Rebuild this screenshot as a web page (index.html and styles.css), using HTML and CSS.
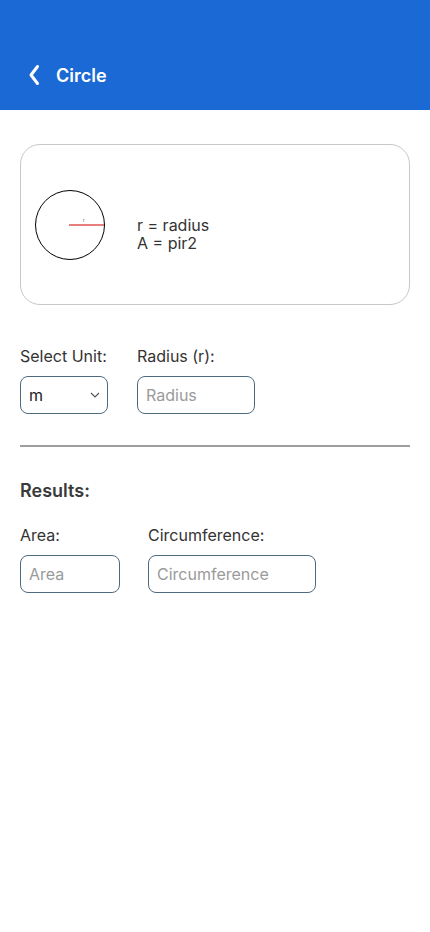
FILE: index.html
```html
<!DOCTYPE html>
<html>
<head>
<meta charset="utf-8">
<link rel="stylesheet" href="styles.css">
</head>
<body>
<header class="appbar">
  <svg class="back" width="14" height="22" viewBox="0 0 14 22"><path d="M10.5 2.5 L4 11 L10.5 19.5" fill="none" stroke="#fff" stroke-width="3" stroke-linecap="round" stroke-linejoin="round"/></svg>
  <span class="title">Circle</span>
</header>
<main class="content">
  <section class="card">
    <svg class="figure" width="72" height="72" viewBox="0 0 72 72">
      <circle cx="36" cy="36" r="34.5" fill="none" stroke="#000" stroke-width="1"/>
      <line x1="35" y1="36" x2="70" y2="36" stroke="#d00000" stroke-width="1.2"/>
      <text x="49" y="33" font-size="4" font-family="Inter, sans-serif" fill="#333">r</text>
    </svg>
    <div class="legend">
      <div>r = radius</div>
      <div>A = pir2</div>
    </div>
  </section>
  <section class="row inputs">
    <div class="field">
      <label class="lbl">Select Unit:</label>
      <div class="box select">
        <span>m</span>
        <svg width="10" height="6" viewBox="0 0 10 6"><path d="M1 1 L5 5 L9 1" fill="none" stroke="#555" stroke-width="1.2"/></svg>
      </div>
    </div>
    <div class="field">
      <label class="lbl">Radius (r):</label>
      <div class="box w118"><span class="ph">Radius</span></div>
    </div>
  </section>
  <hr class="divider">
  <h2 class="results">Results:</h2>
  <section class="row outputs">
    <div class="field">
      <label class="lbl">Area:</label>
      <div class="box w100"><span class="ph">Area</span></div>
    </div>
    <div class="field">
      <label class="lbl">Circumference:</label>
      <div class="box w168"><span class="ph">Circumference</span></div>
    </div>
  </section>
</main>
</body>
</html>
```
FILE: styles.css
```css
* { box-sizing: border-box; }
html, body { margin: 0; padding: 0; background: #fff; }
body { font-family: Inter, "Noto Sans", sans-serif; color: #333; width: 430px; height: 932px; }
.appbar {
  height: 110px;
  background: #1a69d4;
  display: flex;
  align-items: flex-end;
  padding: 0 0 23px 27px;
  gap: 15px;
}
.back { display: block; margin-bottom: 1px; }
.title { color: #fff; font-size: 18px; font-weight: 600; line-height: 22px; }
.content { padding: 34px 20px 0 20px; }
.card {
  height: 161px;
  border: 1px solid #c8c8c8;
  border-radius: 20px;
  display: flex;
  align-items: center;
  padding-left: 13px;
  padding-top: 1px;
}
.figure { display: block; }
.legend { margin-left: 31px; font-size: 16px; line-height: 18px; color: #333; margin-top: 18px; }
.row { display: flex; }
.inputs { margin-top: 41px; gap: 29px; }
.outputs { margin-top: 23px; gap: 28px; }
.field { display: flex; flex-direction: column; }
.lbl { font-size: 16px; line-height: 20px; color: #333; margin-bottom: 10px; }
.box {
  height: 38px;
  border: 1px solid #4d6b7f;
  border-radius: 8px;
  display: flex;
  align-items: center;
  padding: 0 8px;
  font-size: 16px;
}
.select { width: 88px; justify-content: space-between; padding-right: 7px; color: #222; }
.w118 { width: 118px; }
.w100 { width: 100px; }
.w168 { width: 168px; }
.ph { color: #9a9a9a; }
.divider { border: 0; height: 2px; background: #9e9e9e; margin: 31px 0 0 0; }
.results { font-size: 18px; font-weight: 600; margin: 33px 0 0 0; line-height: 22px; color: #3a3a3a; }
```
